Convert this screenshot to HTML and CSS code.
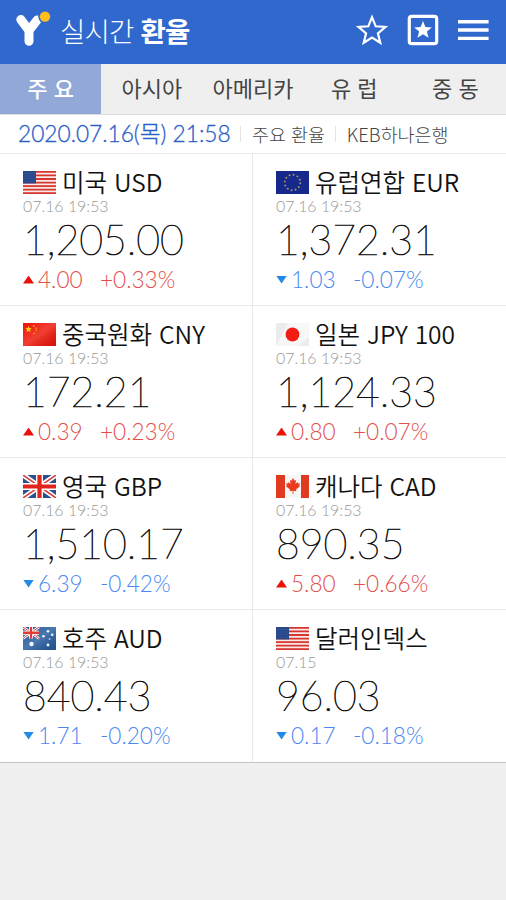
FILE: index.html
```html
<!DOCTYPE html>
<html lang="ko">
<head>
    <meta charset="UTF-8">
    <meta name="viewport" content="width=device-width, initial-scale=1.0">
    <title>실시간 환율</title>
    <link rel="stylesheet" href="styles.css">
</head>
<body>
    <!-- Shared flags -->
    <svg class="defs" width="0" height="0">
        <linearGradient id="shine" x1="0" y1="0" x2="1" y2="1">
            <stop offset="0" stop-color="#fff" stop-opacity="0"/>
            <stop offset="0.5" stop-color="#fff" stop-opacity="0.18"/>
            <stop offset="1" stop-color="#000" stop-opacity="0.08"/>
        </linearGradient>
        <symbol id="flag-us" viewBox="0 0 33 23">
            <rect width="33" height="23" fill="#f6e9e6"/>
            <path d="M0 .9h33M0 4.45h33M0 8h33M0 11.55h33M0 15.1h33M0 18.6h33M0 22.1h33" stroke="#d8352f" stroke-width="1.8"/>
            <rect width="13" height="12.4" fill="#27488b"/>
            <path d="M1.5 2.5h11M1.5 5h11M1.5 7.5h11M1.5 10h11" stroke="#4c6aa3" stroke-width=".7" stroke-dasharray="1 1.3"/>
        </symbol>
        <symbol id="flag-eu" viewBox="0 0 33 23">
            <rect width="33" height="23" fill="#17288c"/>
            <circle cx="16.5" cy="11.5" r="7.8" fill="none" stroke="#a79c5c" stroke-width="1.7" stroke-dasharray="1.7 2.384"/>
        </symbol>
        <symbol id="flag-cn" viewBox="0 0 33 23">
            <rect width="33" height="23" fill="#ee1407"/>
            <rect width="33" height="23" fill="url(#shine)"/>
            <path d="M5.5 3l.9 2.1 2.3.2-1.7 1.5.5 2.3-2-1.2-2 1.2.5-2.3-1.7-1.5 2.3-.2z" fill="#ffd500"/>
            <path d="M10 2.6l1.5.8M12.5 4.8l1.2 1M12.8 8.2l.9-1M10.3 10.6l1.4-.6" stroke="#f7b500" stroke-width="1.2"/>
        </symbol>
        <symbol id="flag-jp" viewBox="0 0 33 23">
            <rect width="33" height="23" fill="#f7f7f7"/>
            <path d="M0 23L12 0H0zM33 14v9H22z" fill="#ececec"/>
            <circle cx="16.5" cy="11.5" r="6.9" fill="#f21d12"/>
        </symbol>
        <symbol id="flag-gb" viewBox="0 0 33 23">
            <rect width="33" height="23" fill="#29508f"/>
            <path d="M0 0l33 23M33 0L0 23" stroke="#fff" stroke-width="5"/>
            <path d="M0 0l33 23M33 0L0 23" stroke="#db3a37" stroke-width="1.5"/>
            <path d="M16.5 0v23M0 11.5h33" stroke="#fff" stroke-width="7"/>
            <path d="M16.5 0v23M0 11.5h33" stroke="#df241d" stroke-width="4.2"/>
        </symbol>
        <symbol id="flag-ca" viewBox="0 0 33 23">
            <rect width="33" height="23" fill="#f8f5f5"/>
            <path d="M0 0h9v23H0zM25 0h8v23h-8z" fill="#e03a20"/>
            <path d="M17 3l1.6 2.8 1.5-.7-.6 4 2-2 .5 1.3 2-.2-.8 2.4.8.7-4 3.2.3 1.7-2.9-.4V19h-.8v-3.2l-2.9.4.3-1.7-4-3.2.8-.7-.8-2.4 2 .2.5-1.3 2 2-.6-4 1.5.7z" fill="#ea3b20"/>
        </symbol>
        <symbol id="flag-au" viewBox="0 0 33 23">
            <rect width="33" height="23" fill="#235a9d"/>
            <rect width="33" height="23" fill="url(#shine)"/>
            <path d="M0 0l16 11.5M16 0L0 11.5" stroke="#fff" stroke-width="2.6"/>
            <path d="M0 0l16 11.5M16 0L0 11.5" stroke="#e0433f" stroke-width="1"/>
            <path d="M8 0v11.5M0 5.75h16" stroke="#fff" stroke-width="4"/>
            <path d="M8 0v11.5M0 5.75h16" stroke="#e23a35" stroke-width="2.3"/>
            <g fill="#eef7ff">
                <circle cx="8.5" cy="17" r="2.2"/>
                <circle cx="25" cy="4.3" r="1.3"/>
                <circle cx="20.5" cy="9.3" r="1.3"/>
                <circle cx="29.2" cy="7.7" r="1.3"/>
                <circle cx="25" cy="18" r="1.4"/>
                <circle cx="26.5" cy="12" r=".8"/>
            </g>
        </symbol>
    </svg>

    <header class="header">
        <svg class="logo" width="36" height="36" viewBox="0 0 36 36">
            <path d="M5.8 7.5l8.2 11L22.2 8M14 18v11.2" fill="none" stroke="#fff" stroke-width="9" stroke-linecap="round" stroke-linejoin="round"/>
            <circle cx="30" cy="4.6" r="6.8" fill="#3068ce"/>
            <circle cx="30" cy="4.6" r="5.2" fill="#fdbd1b"/>
        </svg>
        <h1 class="title">실시간 <b>환율</b></h1>
        <div class="actions">
            <svg width="32" height="32" viewBox="0 0 32 32">
                <path d="M16 3.2l3.7 9.1 9.6.7-7.4 6.3 2.4 9.5-8.3-5.2-8.3 5.2 2.4-9.5L2.7 13l9.6-.7z" fill="none" stroke="#fff" stroke-width="2.2"/>
            </svg>
            <svg width="32" height="32" viewBox="0 0 32 32">
                <rect x="2.3" y="2.3" width="27.4" height="27.4" rx="2.5" fill="none" stroke="#fff" stroke-width="3.2"/>
                <path d="M16 7l2.4 6 6.4.4-4.9 4.1 1.6 6.2-5.5-3.4-5.5 3.4 1.6-6.2-4.9-4.1 6.4-.4z" fill="#fff"/>
            </svg>
            <svg width="32" height="32" viewBox="0 0 32 32">
                <path d="M0 7.8h30.6M0 16h30.6M0 24.4h30.6" stroke="#fff" stroke-width="3.4"/>
            </svg>
        </div>
    </header>

    <nav class="tabs">
        <a class="tab active">주 요</a>
        <a class="tab">아시아</a>
        <a class="tab">아메리카</a>
        <a class="tab">유 럽</a>
        <a class="tab">중 동</a>
    </nav>

    <div class="info">
        <span class="info-date">2020.07.16(목) 21:58</span>
        <span class="info-item">주요 환율</span>
        <span class="info-item">KEB하나은행</span>
    </div>

    <main class="rates">
        <div class="rate up">
            <div class="name"><svg class="flag"><use href="#flag-us"/></svg>미국 USD</div>
            <div class="time">07.16 19:53</div>
            <div class="price">1,205.00</div>
            <div class="change"><i class="arrow"></i><span class="diff">4.00</span><span>+0.33%</span></div>
        </div>
        <div class="rate down">
            <div class="name"><svg class="flag"><use href="#flag-eu"/></svg>유럽연합 EUR</div>
            <div class="time">07.16 19:53</div>
            <div class="price">1,372.31</div>
            <div class="change"><i class="arrow"></i><span class="diff">1.03</span><span>-0.07%</span></div>
        </div>
        <div class="rate up">
            <div class="name"><svg class="flag"><use href="#flag-cn"/></svg>중국원화 CNY</div>
            <div class="time">07.16 19:53</div>
            <div class="price">172.21</div>
            <div class="change"><i class="arrow"></i><span class="diff">0.39</span><span>+0.23%</span></div>
        </div>
        <div class="rate up">
            <div class="name"><svg class="flag"><use href="#flag-jp"/></svg>일본 JPY 100</div>
            <div class="time">07.16 19:53</div>
            <div class="price">1,124.33</div>
            <div class="change"><i class="arrow"></i><span class="diff">0.80</span><span>+0.07%</span></div>
        </div>
        <div class="rate down">
            <div class="name"><svg class="flag"><use href="#flag-gb"/></svg>영국 GBP</div>
            <div class="time">07.16 19:53</div>
            <div class="price">1,510.17</div>
            <div class="change"><i class="arrow"></i><span class="diff">6.39</span><span>-0.42%</span></div>
        </div>
        <div class="rate up">
            <div class="name"><svg class="flag"><use href="#flag-ca"/></svg>캐나다 CAD</div>
            <div class="time">07.16 19:53</div>
            <div class="price">890.35</div>
            <div class="change"><i class="arrow"></i><span class="diff">5.80</span><span>+0.66%</span></div>
        </div>
        <div class="rate down">
            <div class="name"><svg class="flag"><use href="#flag-au"/></svg>호주 AUD</div>
            <div class="time">07.16 19:53</div>
            <div class="price">840.43</div>
            <div class="change"><i class="arrow"></i><span class="diff">1.71</span><span>-0.20%</span></div>
        </div>
        <div class="rate down">
            <div class="name"><svg class="flag"><use href="#flag-us"/></svg>달러인덱스</div>
            <div class="time">07.15</div>
            <div class="price">96.03</div>
            <div class="change"><i class="arrow"></i><span class="diff">0.17</span><span>-0.18%</span></div>
        </div>
    </main>
</body>
</html>
```

FILE: styles.css
```css
* {
    box-sizing: border-box;
}
body {
    margin: 0;
    background-color: #f0f0f0;
    color: #111;
    font-family: "Noto Sans CJK KR", sans-serif;
    white-space: nowrap;
}
.defs {
    display: block;
}
.header {
    display: flex;
    align-items: center;
    height: 64px;
    padding: 0 16px 4px 15px;
    background-color: #3068ce;
    color: #fff;
}
.logo {
    margin-right: 9px;
    overflow: visible;
}
.title {
    margin: 0;
    font-size: 27.5px;
    font-weight: 300;
    line-height: 40px;
    letter-spacing: -0.8px;
}
.title b {
    font-weight: 700;
}
.actions {
    display: flex;
    gap: 19px;
    margin-left: auto;
}
.tabs {
    display: grid;
    grid-template-columns: repeat(5, 1fr);
    height: 51px;
    background-color: #efefef;
    border-bottom: 1px solid #ddd;
}
.tab {
    font-size: 22px;
    line-height: 46px;
    text-align: center;
    color: #444;
}
.tab.active {
    background-color: #92a8d6;
    color: #fff;
    font-weight: 500;
}
.info {
    display: flex;
    align-items: center;
    height: 39px;
    padding-left: 18px;
    background-color: #fff;
    border-bottom: 1px solid #eee;
}
.info-date {
    width: 222px;
    font-family: Lato, "Noto Sans CJK KR", sans-serif;
    font-size: 22.7px;
    font-weight: 300;
    line-height: 36px;
    color: #2a5fc8;
    -webkit-text-stroke: 0.3px #2a5fc8;
}
.info-item {
    margin-right: 10px;
    padding-left: 11px;
    border-left: 1px solid #e4e4e4;
    font-size: 18.4px;
    line-height: 16px;
    font-weight: 300;
    color: #444;
}
.rates {
    display: grid;
    grid-template-columns: 1fr 1fr;
    grid-auto-rows: 152px;
    background-color: #fff;
    border-bottom: 1px solid #c4c4c4;
    box-shadow: 0 1px 2px rgba(0, 0, 0, 0.15);
}
.rate {
    padding: 12px 0 0 23px;
    border-bottom: 1px solid #e9e9e9;
    font-family: Lato, sans-serif;
}
.rate:nth-child(odd) {
    border-right: 1px solid #e9e9e9;
}
.rate:nth-last-child(-n+2) {
    border-bottom: none;
}
.name {
    display: flex;
    align-items: center;
    height: 32px;
    padding-bottom: 2px;
    font-family: "Noto Sans CJK KR", sans-serif;
    font-size: 24.5px;
    font-weight: 350;
}
.flag {
    width: 33px;
    height: 23px;
    margin-top: 2px;
    margin-right: 6px;
}
.time {
    font-size: 15.9px;
    line-height: 16px;
    font-weight: 300;
    color: #999;
}
.price {
    font-size: 41px;
    line-height: 52px;
    font-weight: 200;
    -webkit-text-stroke: 0.7px #111;
}
.change {
    display: flex;
    align-items: center;
    font-size: 22.6px;
    line-height: 27px;
    font-weight: 300;
}
.diff {
    width: 62px;
}
.arrow {
    width: 11px;
    height: 8px;
    margin-right: 4px;
    clip-path: polygon(50% 0, 100% 100%, 0 100%);
}
.up .change {
    color: #e2504c;
}
.down .change {
    color: #4a8af0;
}
.up .arrow {
    background-color: #e8140c;
}
.down .arrow {
    background-color: #1f8ae8;
    clip-path: polygon(0 0, 100% 0, 50% 100%);
}
```
